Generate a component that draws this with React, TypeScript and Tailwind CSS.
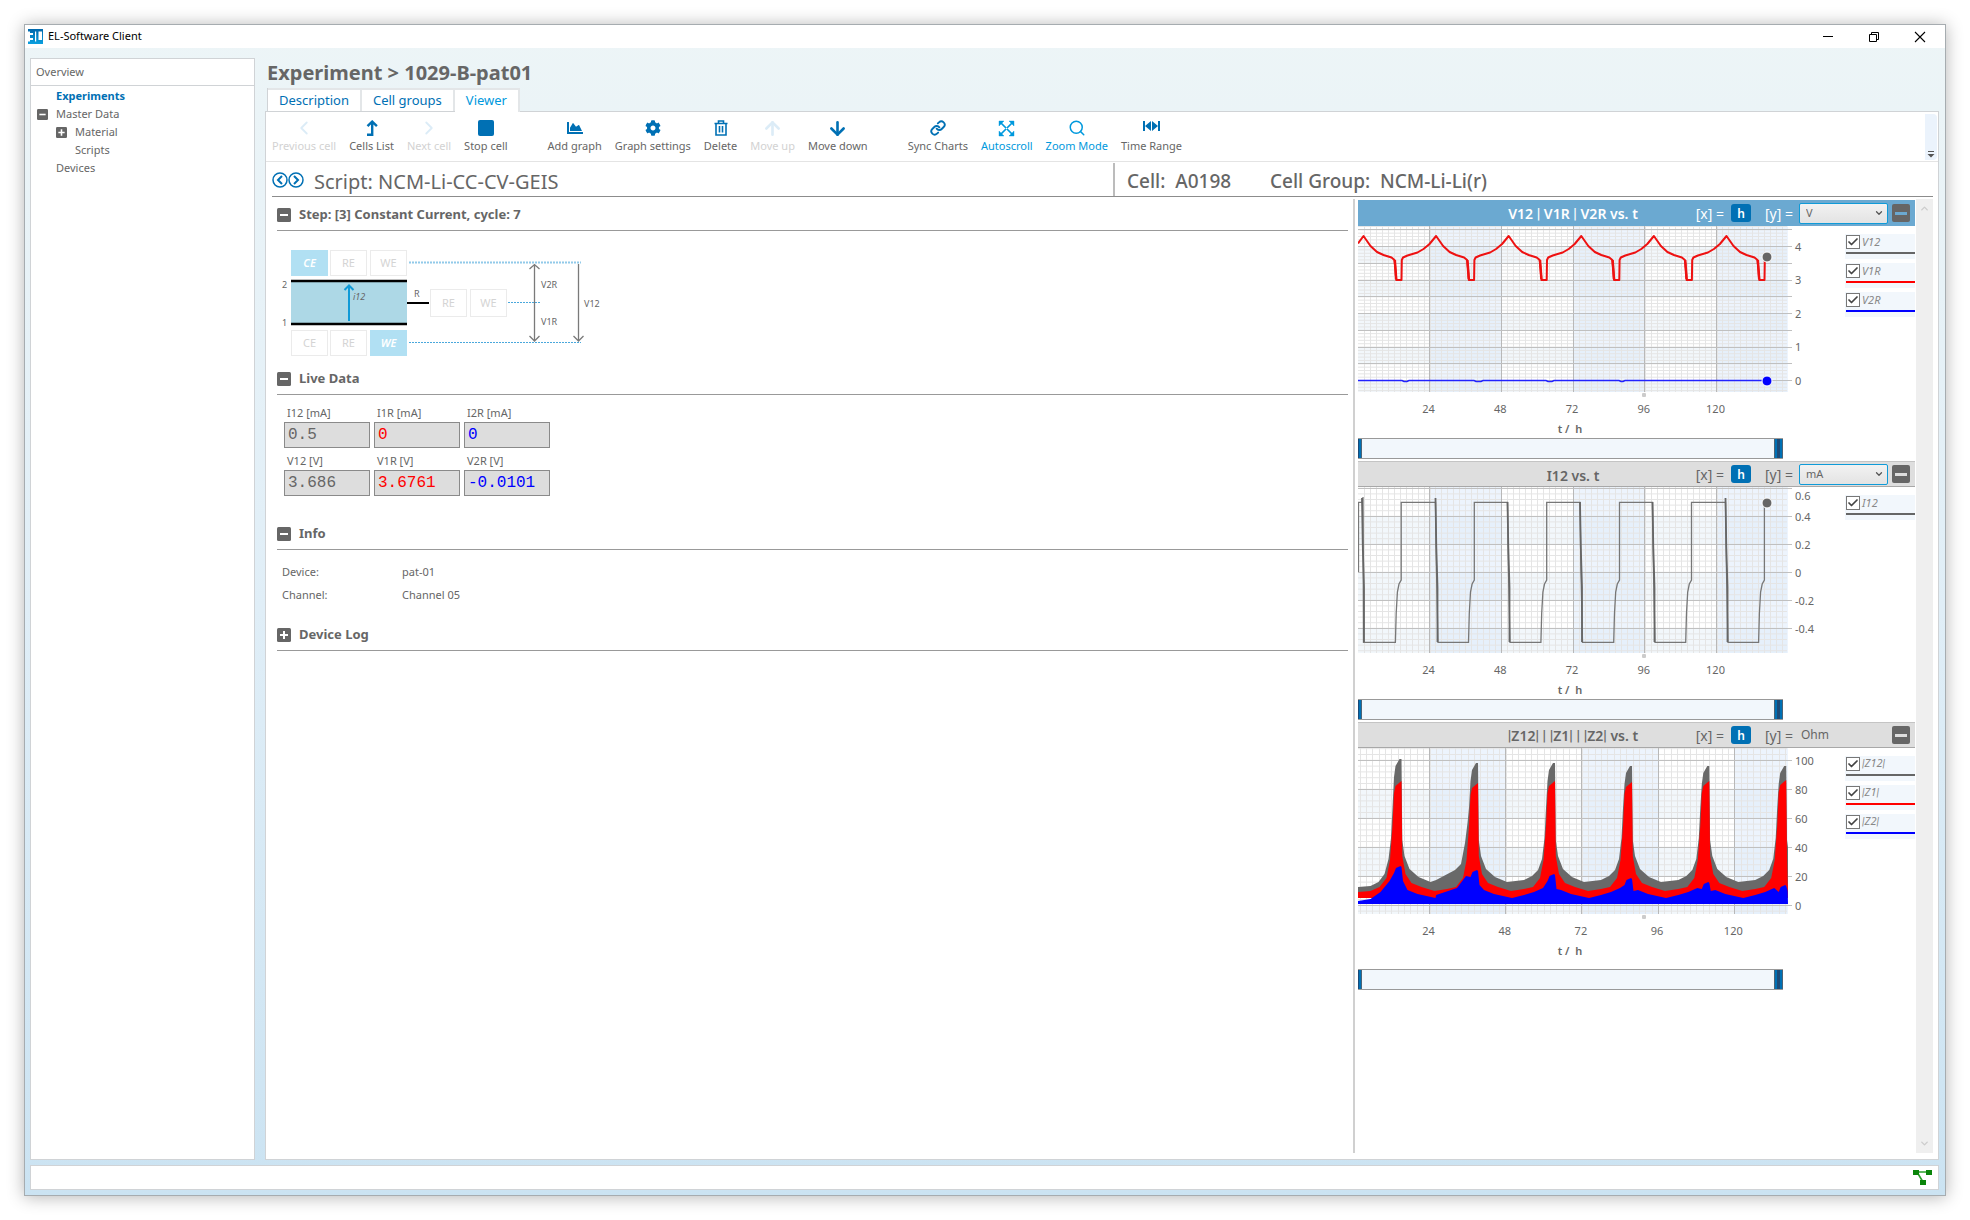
import React from "react";
import { FaChartArea, FaCog } from "react-icons/fa";
import {
  ArrowDown,
  ArrowUp,
  Check,
  ChevronDown,
  ChevronLeft,
  ChevronRight,
  ChevronUp,
  Link,
  Search,
} from "lucide-react";

/* ---------- small shared pieces ---------- */

function FoldIcon({ open, big }: { open: boolean; big?: boolean }) {
  const size = big ? 14 : 11;
  return (
    <svg width={size} height={size} viewBox="0 0 14 14" className="shrink-0">
      <rect width="14" height="14" rx="1.5" fill="#666" />
      <path d={open ? "M3 7H11" : "M3 7H11M7 3V11"} stroke="#fff" strokeWidth="2" />
    </svg>
  );
}

function Logo() {
  return (
    <svg width="15" height="15" viewBox="0 0 15 15">
      <defs>
        <linearGradient id="logo" x1="0" y1="0" x2="0" y2="1">
          <stop offset="0" stopColor="#0067ab" />
          <stop offset="1" stopColor="#0aa0e0" />
        </linearGradient>
      </defs>
      <rect width="15" height="15" fill="url(#logo)" />
      <path d="M0 2.5H2V12.5H0ZM2 4H5V6H2ZM2 9H5V11H2ZM7 2.500H8.200V12.500H7ZM10.500 2.500H14V11H10.500Z" fill="#fff" />
    </svg>
  );
}

/* Vertical bars are set in a face with a narrow bar glyph. */
function Barred({ text }: { text: string }) {
  return (
    <>
      {text.split("").map((ch, i) =>
        ch === "|" ? (
          <span key={i} className="font-['Roboto',sans-serif]">|</span>
        ) : (
          ch
        ),
      )}
    </>
  );
}

/* ---------- window frame ---------- */

function TitleBar() {
  return (
    <header className="flex h-[23px] items-center bg-white pl-[3px] pr-[19px]">
      <Logo />
      <span className="ml-[5px] flex-1 text-[11px] text-black">EL-Software Client</span>
      <div className="flex gap-[34px] text-black">
        <button aria-label="Minimize" className="grid size-3">
          <svg viewBox="0 0 12 12"><path d="M1 5.5H11" stroke="currentColor" /></svg>
        </button>
        <button aria-label="Restore" className="grid size-3">
          <svg viewBox="0 0 12 12" fill="none" stroke="currentColor">
            <path d="M1.5 3.5H8.5V10.5H1.5ZM3.5 3.5V1.5H10.5V8.5H8.5" />
          </svg>
        </button>
        <button aria-label="Close" className="grid size-3">
          <svg viewBox="0 0 12 12"><path d="M1 1L11 11M11 1L1 11" stroke="currentColor" strokeWidth="1.1" /></svg>
        </button>
      </div>
    </header>
  );
}

function Sidebar() {
  return (
    <nav className="w-[225px] shrink-0 border border-[#d0d3d6] bg-white text-[11px]">
      <h2 className="flex h-[27px] items-center border-b border-[#d0d3d6] pl-[5px]">Overview</h2>
      <ul className="mt-px leading-[18px]">
        <li className="pl-[25px] font-bold text-[#0070b4]">Experiments</li>
        <li>
          <div className="flex items-center gap-2 pl-1.5">
            <FoldIcon open />
            Master Data
          </div>
          <ul>
            <li className="flex items-center gap-2 pl-[25px]">
              <FoldIcon open={false} />
              Material
            </li>
            <li className="pl-11">Scripts</li>
          </ul>
        </li>
        <li className="pl-[25px]">Devices</li>
      </ul>
    </nav>
  );
}

/* ---------- toolbar ---------- */

const disabledIcon = "text-[#dcecf7]";
const blue = "text-[#0070b4]";
const bright = "text-[#0099dd]";

function ToolButton({
  label,
  tone = blue,
  textTone = "text-[#666]",
  children,
}: {
  label: string;
  tone?: string;
  textTone?: string;
  children: React.ReactNode;
}) {
  return (
    <button className="flex shrink-0 flex-col items-center px-1.5">
      <span className={`flex h-[18px] items-center ${tone}`}>{children}</span>
      <span className={`text-[11px] leading-[17px] ${textTone}`}>{label}</span>
    </button>
  );
}

function Toolbar() {
  const grey = "text-[#d2d2d2]";
  return (
    <div className="flex h-[50px] border-b border-[#e4e4e4] pr-px">
      <div className="flex flex-1 items-start gap-px pt-[7px]">
        <ToolButton label="Previous cell" tone={disabledIcon} textTone={grey}><ChevronLeft size={22} strokeWidth={2} /></ToolButton>
        <ToolButton label="Cells List">
          <svg width="12" height="16" viewBox="0 0 12 16" fill="none" stroke="currentColor" strokeWidth="2.4">
            <path d="M1 14.8H6.2V2.5M1.5 6.2L6.2 1.6L10.9 6.2" />
          </svg>
        </ToolButton>
        <ToolButton label="Next cell" tone={disabledIcon} textTone={grey}><ChevronRight size={22} strokeWidth={2} /></ToolButton>
        <ToolButton label="Stop cell"><span className="size-4 rounded-xs bg-[#0070b4]" /></ToolButton>
        <span className="w-[26px]" />
        <ToolButton label="Add graph"><FaChartArea size={16} /></ToolButton>
        <ToolButton label="Graph settings"><FaCog size={16} /></ToolButton>
        <ToolButton label="Delete">
          <svg width="14" height="16" viewBox="0 0 14 16" fill="none" stroke="currentColor" strokeWidth="1.6">
            <path d="M0.5 3.5H13.5M4.5 3V1H9.5V3M2 3.5V15H12V3.5M5.5 6V12.5M8.5 6V12.5" />
          </svg>
        </ToolButton>
        <ToolButton label="Move up" tone={disabledIcon} textTone={grey}><ArrowUp size={21} strokeWidth={3} /></ToolButton>
        <ToolButton label="Move down"><ArrowDown size={21} strokeWidth={3} /></ToolButton>
        <span className="w-[26px]" />
        <ToolButton label="Sync Charts"><Link size={16} strokeWidth={2.8} /></ToolButton>
        <ToolButton label="Autoscroll" tone={bright} textTone={bright}>
          <svg width="17" height="17" viewBox="0 0 17 17" fill="currentColor" stroke="currentColor">
            <path d="M2.5 2.5L14.5 14.5M14.5 2.5L2.5 14.5" strokeWidth="1.7" />
            <path d="M1 1H6L1 6ZM16 1V6L11 1ZM1 16V11L6 16ZM16 16H11L16 11Z" strokeWidth="0.4" />
            <path d="M8.5 7.5L9.5 8.5L8.5 9.500L7.500 8.5Z" fill="#fff" stroke="none" />
          </svg>
        </ToolButton>
        <ToolButton label="Zoom Mode" tone={bright} textTone={bright}><Search size={18} strokeWidth={2} /></ToolButton>
        <ToolButton label="Time Range">
          <svg width="17" height="17" viewBox="0 0 17 17" fill="currentColor">
            <path d="M0 1H2V11H0ZM15 1H17V11H15ZM8 1V11L2 6ZM9 1V11L15 6Z" />
          </svg>
        </ToolButton>
      </div>
      <button aria-label="Toolbar options" className="mt-0.5 flex h-[46px] w-3 flex-col items-center justify-end rounded-r bg-[#ebf3fc] pb-0.5">
        <svg width="8" height="8" viewBox="0 0 8 8" fill="#555">
          <path d="M1 1H7V2H1ZM0.5 4H7.5L4 7.5Z" />
        </svg>
      </button>
    </div>
  );
}

/* ---------- left pane ---------- */

function Section({ title, open = true, className = "", children }: { title: string; open?: boolean; className?: string; children?: React.ReactNode }) {
  return (
    <section className={className}>
      <h3 className="flex h-8 border-b border-[#999] text-[13px] font-bold">
        <button className="flex items-center gap-2">
          <FoldIcon open={open} big />
          {title}
        </button>
      </h3>
      {children}
    </section>
  );
}

function Electrode({ x, y, label, active, w = 37, h = 26 }: { x: number; y: number; label: string; active?: boolean; w?: number; h?: number }) {
  return (
    <g>
      <rect x={x + 0.5} y={y + 0.5} width={w - 1} height={h - 1} fill={active ? "#b1e0f3" : "#fff"} stroke={active ? "#b1e0f3" : "#ebebeb"} />
      <text
        x={x + w / 2}
        y={y + h / 2 + 4}
        textAnchor="middle"
        fontSize="11"
        fill={active ? "#fff" : "#d4d4d4"}
        fontWeight={active ? 600 : 400}
        fontStyle={active ? "italic" : "normal"}
      >
        {label}
      </text>
    </g>
  );
}

function CellDiagram() {
  return (
    <svg width="340" height="132" viewBox="0 0 340 132" className="block">
      <Electrode x={14} y={19} label="CE" active />
      <Electrode x={53} y={19} label="RE" />
      <Electrode x={93} y={19} label="WE" />
      <Electrode x={14} y={99} label="CE" />
      <Electrode x={53} y={99} label="RE" />
      <Electrode x={93} y={99} label="WE" active />
      <rect x="14" y="50" width="116" height="44" fill="#add8e6" />
      <path d="M14 50H130M14 93H130" stroke="#000" strokeWidth="2.5" />
      <path d="M130 72H152" stroke="#000" strokeWidth="2" />
      <Electrode x={153} y={58} label="RE" h={28} />
      <Electrode x={193} y={58} label="WE" h={28} />
      <path d="M72 90V54M67.500 59L72 54.500L76.500 59" stroke="#109ad7" strokeWidth="2" fill="none" />
      <g stroke="#4aa8dc" strokeDasharray="2 1">
        <path d="M132 31.500H304" strokeWidth="2" opacity="0.6" />
        <path d="M231 71.500H263" strokeWidth="1" />
        <path d="M132 111.500H304" strokeWidth="1" />
      </g>
      <g stroke="#7a7a7a" strokeWidth="1.300" fill="none">
        <path d="M257.500 33V110M252.500 38L257.500 33.500L262.500 38M252.500 105L257.500 110L262.500 105" />
        <path d="M301.500 33V110M296.500 105L301.500 110L306.500 105" />
      </g>
      <g fill="#666" fontSize="9">
        <text x="5" y="57">2</text>
        <text x="5" y="95">1</text>
        <text x="137" y="66">R</text>
        <text x="76" y="69" fontStyle="italic">i12</text>
        <text x="264" y="57">V2R</text>
        <text x="264" y="94">V1R</text>
        <text x="307" y="76">V12</text>
      </g>
    </svg>
  );
}

const readings = [
  { label: "I12 [mA]", value: "0.5", tone: "text-[#666]" },
  { label: "I1R [mA]", value: "0", tone: "text-[#ff0000]" },
  { label: "I2R [mA]", value: "0", tone: "text-[#0000ff]" },
  { label: "V12 [V]", value: "3.686", tone: "text-[#666]" },
  { label: "V1R [V]", value: "3.6761", tone: "text-[#ff0000]" },
  { label: "V2R [V]", value: "-0.0101", tone: "text-[#0000ff]" },
];

function LeftPane() {
  return (
    <div className="min-w-0 flex-1 pl-[5px] pr-[5px] text-[11px]">
      <Section title="Step: [3] Constant Current, cycle: 7">
        <CellDiagram />
      </Section>
      <Section title="Live Data">
        <div className="grid w-fit grid-cols-3 gap-x-1 px-[7px] pt-2.5">
          {readings.map((r) => (
            <label key={r.label} className="block w-[86px]">
              <span className="block h-[17px] pl-[3px] leading-[15px]">{r.label}</span>
              <input
                readOnly
                value={r.value}
                className={`mb-[5px] block h-[26px] w-full border border-[#8a8a8a] bg-[#ddd] px-[3px] font-['Liberation_Mono',monospace] text-[16px] outline-none ${r.tone}`}
              />
            </label>
          ))}
        </div>
      </Section>
      <Section title="Info" className="mt-[17px]">
        <dl className="grid grid-cols-[120px_1fr] pl-[5px] pt-2.5 leading-[23px]">
          <dt>Device:</dt>
          <dd>pat-01</dd>
          <dt>Channel:</dt>
          <dd>Channel 05</dd>
        </dl>
      </Section>
      <Section title="Device Log" open={false} className="mt-[13px]" />
    </div>
  );
}

/* ---------- charts ---------- */

const PLOT_W = 429;
const PLOT_H = 166;
const pts = (p: number[][]) => p.map((q) => q.join(",")).join(" ");

type Axis = { first: number; step: number };

function Plot({
  x,
  y,
  yLabels,
  children,
}: {
  x: Axis;
  y: Axis;
  yLabels: [number, string][];
  children: React.ReactNode;
}) {
  const minorX: number[] = [];
  for (let v = x.first - x.step; v < PLOT_W; v += x.step / 12) if (v > 0) minorX.push(v);
  const minorY: number[] = [];
  for (let v = y.first - y.step; v < PLOT_H; v += y.step / 5) if (v > 0) minorY.push(v);
  const majorX = [0, 1, 2, 3, 4].map((k) => x.first + k * x.step);
  const majorY: number[] = [];
  for (let v = y.first; v < PLOT_H; v += y.step) majorY.push(v);
  const clip = `plot${y.first}`;
  return (
    <svg width="487" height="212" viewBox="0 0 487 212" className="block shrink-0">
      <clipPath id={clip}><rect width={PLOT_W + 1} height={PLOT_H} /></clipPath>
      <g clipPath={`url(#${clip})`}>
        <rect width={PLOT_W} height={PLOT_H} fill="#fff" />
        {majorY.map((v, i) => (i % 2 === 1 ? <rect key={v} y={v} width={PLOT_W} height={y.step} fill="#f2f7fb" /> : null))}
        {[0, 2, 4].map((k) => <rect key={k} x={majorX[k]} width={x.step} height={PLOT_H} fill="#d8e6fa" opacity="0.45" />)}
        <path d={minorX.map((v) => `M${Math.round(v) + 0.5} 0V166`).join("")} stroke="#e5e5e5" />
        <path d={minorY.map((v) => `M0 ${v}H429`).join("")} stroke="#e5e5e5" />
        <path d={majorX.map((v) => `M${Math.round(v - 0.5) + 0.5} 0V166`).join("")} stroke="#b8b8b8" />
      </g>
      <path d={majorY.map((v) => `M0 ${Math.floor(v) + 0.5}H434`).join("")} stroke="#c0c0c0" />
      <g clipPath={`url(#${clip})`}>{children}</g>
      <rect x="284" y="167" width="4" height="4" rx="1" fill="#ccc" />
      <g fill="#666" fontSize="11">
        {yLabels.map(([v, t]) => <text key={t} x="437" y={v + 4}>{t}</text>)}
        {majorX.map((v, k) => <text key={k} x={v - 1} y="187" textAnchor="middle">{24 * (k + 1)}</text>)}
        <text x="212" y="207" textAnchor="middle" fontWeight="600">{"t /\u00a0 h"}</text>
      </g>
    </svg>
  );
}

/* V1R: one charge/discharge cycle relative to its peak, repeated every 72.6 px. */
function VoltageSeries() {
  const cycle = [[0, 10], [7, 20], [13.5, 26], [20, 29], [28, 31.5], [31, 34], [32, 44], [32.7, 54], [38, 54], [38.3, 34], [39.5, 31.5], [44, 29.5], [54, 26.5], [60, 23], [66, 18]];
  const line: number[][] = [[0, 17.5]];
  for (let k = 0; k < 6; k++) {
    for (const [dx, y] of cycle) {
      const px = 5.5 + 72.6 * k + dx;
      if (px < 408) line.push([px, y]);
    }
  }
  return (
    <g fill="none">
      <polyline points={pts(line)} stroke="#ee1111" strokeWidth="2" strokeLinejoin="round" />
      {[0, 1, 2, 3, 4, 5].map((k) => (
        <path key={k} d={`M${36.8 + 72.6 * k} 34L${38.2 + 72.6 * k} 53`} stroke="#ee1111" strokeWidth="2.500" />
      ))}
      <path d="M0 154.500H44L46 155.500H49L51 154.500H116L118 155.500H123L125 154.500H188L190 155.500H194L196 154.500H261L263 155.500H265L267 154.500H409" stroke="#2222ff" strokeWidth="1.500" />
      <circle cx="409" cy="31" r="5" fill="#666" stroke="#fff" />
      <circle cx="409" cy="155" r="5" fill="#00f" stroke="#fff" />
    </g>
  );
}

function CurrentSeries() {
  const up = [43.2, 116.3, 188.7, 261.5, 333.5, 406.4];
  const drop = [77.5, 149.5, 222, 294.5, 367.5];
  const line: number[][] = [[0.5, 85], [0.5, 15.3], [4, 15.3], [5, 10], [5.5, 155.3]];
  up.forEach((u, i) => {
    line.push([u - 5.8, 155.3], [u - 5, 126], [u - 3.8, 105], [u - 2.2, 97], [u, 93], [u, 15.3]);
    if (i < drop.length) line.push([drop[i], 15.3], [drop[i] + 1, 84], [drop[i] + 2.5, 155.3]);
  });
  return (
    <g fill="none" stroke="#777">
      <polyline points={pts(line)} strokeWidth="1.300" />
      {[4, ...drop].map((d, i) => (
        <path key={d} d={`M${d} ${i === 0 || i === 1 || i === 5 ? 11 : 15}L${d + 0.8} 60L${d + 2} 100V155`} stroke="#666" strokeWidth="1.800" />
      ))}
      <circle cx="409" cy="16" r="5" fill="#666" stroke="#fff" />
    </g>
  );
}

/* Impedance envelopes: each peak is a slow rise followed by a sharp fall. */
const edges = [43.5, 120, 197, 274, 351.3, 428.2];
const tops = {
  grey: [11, 15, 15, 18, 18, 18],
  red: [33, 35, 33, 34, 33, 32],
  blue: [119, 123, 127, 131, 135, 138],
};
function envelope(kind: "grey" | "red" | "blue") {
  const base = { grey: 134, red: 143, blue: 150 }[kind];
  const line: number[][] = [[0, { grey: 139, red: 144, blue: 153 }[kind]]];
  edges.forEach((e, i) => {
    const t = tops[kind][i];
    const first = i === 0;
    const wide = i === 1 ? 1.35 : 1;
    if (kind === "grey") {
      line.push([e - 31 * wide, first ? 138 : base - 2], [e - 23, first ? 134 : i === 1 ? 122 : 128], [e - 17, first ? 126 : i === 1 ? 116 : 122], [e - 13, i === 1 ? 95 : 111], [e - 10.500, i === 1 ? 75 : 90], [e - 9, 60], [e - 7.500, t + 18], [e - 6, t + 7], [e - 2, t], [e, t], [e + 0.800, 92], [e + 3, 108], [e + 8, 121], [e + 17, 129], [e + 29, base]);
    } else if (kind === "red") {
      line.push([e - 31, first ? 143 : base - 2], [e - 22, 139], [e - 15, 130], [e - 11.500, 112], [e - 9, 78], [e - 7.500, t + 12], [e - 6, t + 5], [e - 2.500, t + 2], [e, t], [e + 0.800, 108], [e + 4, 126], [e + 10, 135], [e + 20, 139], [e + 33, base]);
    } else {
      const shoulder = Math.min(t + 14, 143);
      line.push([e - 31 * wide, first ? 151 : 147], [e - 21, i === 1 ? 140 : 144], [e - 12, Math.min(shoulder, i === 1 ? 128 : 140)], [e - 7.500, t + 6], [e - 5.500, t + 1], [e - 1, t - 1], [e, t], [e + 1.500, shoulder], [e + 6, 142], [e + 16, 146], [e + 34, base]);
    }
  });
  const bottom = kind === "blue" ? 156 : 150;
  return pts([...line.filter(([px]) => px <= 432), [430, bottom], [0, bottom]]);
}

function ImpedanceSeries() {
  return (
    <g>
      <polygon points={envelope("grey")} fill="#696969" />
      <polygon points={envelope("red")} fill="#f00" />
      <polygon points={envelope("blue")} fill="#00f" />
    </g>
  );
}

function RangeSlider({ name }: { name: string }) {
  const input =
    "pointer-events-none col-start-1 row-start-1 -ml-[5px] h-[19px] w-[430px] appearance-none bg-transparent outline-none [&::-webkit-slider-thumb]:pointer-events-auto [&::-webkit-slider-thumb]:h-[19px] [&::-webkit-slider-thumb]:w-[9px] [&::-webkit-slider-thumb]:appearance-none [&::-webkit-slider-thumb]:border-x [&::-webkit-slider-thumb]:border-[#4d6375] [&::-webkit-slider-thumb]:bg-[linear-gradient(90deg,#0070b4_35%,#1c4a77_35%,#1c4a77_65%,#0070b4_65%)]";
  return (
    <div className="grid h-[21px] w-[425px] overflow-hidden border-y border-[#999] bg-[#f2f7fc]">
      <input type="range" aria-label={`${name} range start`} defaultValue={0} className={input} />
      <input type="range" aria-label={`${name} range end`} defaultValue={100} className={input} />
    </div>
  );
}

function LegendItem({ name, tone }: { name: string; tone: string }) {
  return (
    <label className="block h-[25px] bg-[#f2f7fc] pl-px text-[11px] italic text-[#888]">
      <span className={`flex h-5 items-center gap-0.5 border-b-2 pb-0.5 ${tone}`}>
        <span className="grid size-3.5 shrink-0">
          <input type="checkbox" defaultChecked className="peer col-start-1 row-start-1 size-3.5 appearance-none border border-[#777] bg-white" />
          <Check size={12} strokeWidth={3.5} className="pointer-events-none invisible col-start-1 row-start-1 place-self-center text-[#444] peer-checked:visible" />
        </span>
        <span><Barred text={name} /></span>
      </span>
    </label>
  );
}

function ChartBlock({
  title,
  unit,
  fixedUnit,
  active,
  legend,
  sliderGap = "",
  children,
}: {
  title: string;
  unit: string;
  fixedUnit?: boolean;
  active?: boolean;
  legend: [string, string][];
  sliderGap?: string;
  children: React.ReactNode;
}) {
  return (
    <section className="mb-0.5">
      <div className={`flex h-[26px] items-center border-y text-[14px] ${active ? "border-[#6ba9d1] bg-[#6ba9d1] text-white" : "border-t-[#c4c4c4] border-b-[#a8a8a8] bg-[#dedede] text-[#666]"}`}>
        <div className="grid flex-1 grid-cols-[430px_1fr] items-center">
          <h3 className="col-start-1 row-start-1 pt-0.5 text-center text-[14px] font-semibold"><Barred text={title} /></h3>
          <div className="col-start-1 col-end-3 row-start-1 flex items-center justify-end">
            <span>[x] =</span>
            <button className="mr-3.5 ml-[7px] h-[18px] w-5 rounded-[3px] bg-[#0070b4] text-[12px] leading-[17px] font-semibold text-white">h</button>
            <span>[y] =</span>
          </div>
        </div>
        {fixedUnit ? (
          <span className="ml-2 w-[91px] text-[12px]">{unit}</span>
        ) : (
          <span className="mr-1 ml-1.5 grid w-[89px] items-center">
            <select aria-label={`${title} y unit`} className="col-start-1 row-start-1 h-[21px] appearance-none rounded-xs border border-[#0f9bd8] bg-linear-to-b from-[#f2f2f2] to-[#e3e3e3] pl-1.5 text-[11px] text-[#666] outline-none">
              <option>{unit}</option>
            </select>
            <ChevronDown size={10} strokeWidth={3} className="pointer-events-none col-start-1 row-start-1 mr-1 justify-self-end text-[#555]" />
          </span>
        )}
        <button aria-label={`Collapse ${title}`} className="mr-[5px] grid h-[18px] w-[18px] place-items-center rounded-xs bg-[#666]">
          <span className={`h-[3px] w-3 ${active ? "bg-[#6ba9d1]" : "bg-[#dedede]"}`} />
        </button>
      </div>
      <div className="flex">
        {children}
        <div className="flex flex-1 flex-col gap-1 pt-2">
          {legend.map(([name, tone]) => <LegendItem key={name} name={name} tone={tone} />)}
        </div>
      </div>
      <div className={sliderGap}>
        <RangeSlider name={title} />
      </div>
    </section>
  );
}

const G = "border-[#666]";
const R = "border-[#ff0000]";
const B = "border-[#0000ff]";

function Charts() {
  return (
    <div className="flex w-[580px] shrink-0 border-l-2 border-[#d0d0d0] pl-[3px]">
      <div className="flex-1 pt-px">
        <ChartBlock title="V12 | V1R | V2R vs. t" unit="V" active legend={[["V12", G], ["V1R", R], ["V2R", B]]}>
          <Plot
            x={{ first: 71.5, step: 71.75 }}
            y={{ first: 3.8, step: 16.75 }}
            yLabels={[[20.5, "4"], [54, "3"], [87.500, "2"], [121, "1"], [154.500, "0"]]}
          >
            <VoltageSeries />
          </Plot>
        </ChartBlock>
        <ChartBlock title="I12 vs. t" unit="mA" legend={[["I12", G]]}>
          <Plot
            x={{ first: 71.5, step: 71.75 }}
            y={{ first: 1.3, step: 28 }}
            yLabels={[[9, "0.6"], [29.500, "0.4"], [57.500, "0.2"], [85.500, "0"], [113.500, "-0.2"], [141.500, "-0.4"]]}
          >
            <CurrentSeries />
          </Plot>
        </ChartBlock>
        <ChartBlock title="|Z12| | |Z1| | |Z2| vs. t" unit="Ohm" fixedUnit sliderGap="pt-[9px]" legend={[["|Z12|", G], ["|Z1|", R], ["|Z2|", B]]}>
          <Plot
            x={{ first: 71.5, step: 76.2 }}
            y={{ first: 12.3, step: 29 }}
            yLabels={[[12.500, "100"], [41.500, "80"], [70.500, "60"], [99.500, "40"], [128.500, "20"], [157.500, "0"]]}
          >
            <ImpedanceSeries />
          </Plot>
        </ChartBlock>
      </div>
      <div className="ml-px flex w-[17px] flex-col items-center justify-between bg-[#efefef] py-1 text-[#ccc]">
        <ChevronUp size={11} strokeWidth={3} />
        <ChevronDown size={11} strokeWidth={3} />
      </div>
    </div>
  );
}

/* ---------- page ---------- */

function Tab({ label, active }: { label: string; active?: boolean }) {
  return (
    <button
      role="tab"
      aria-selected={!!active}
      className={`border-t-2 border-r-2 border-[#e3e6e8] bg-white px-[11px] text-[13px] ${active ? "-mb-px h-6 text-[#0099dd]" : "h-[23px] text-[#0070b4]"}`}
    >
      {label}
    </button>
  );
}

export default function App() {
  return (
    <div className="flex min-h-screen flex-col bg-white p-6 font-['Noto_Sans','Open_Sans',sans-serif] text-[#666]">
      <div className="flex flex-1 flex-col border border-[#a6acb0] bg-linear-to-b from-[#edf5f7] via-[#e0eef7] to-[#cbe3f2] shadow-[0_1px_16px_rgba(0,0,0,0.3)]">
        <TitleBar />
        <div className="flex flex-1 gap-2.5 pl-[5px] pr-[6px] pt-2.5">
          <Sidebar />
          <main className="flex min-w-0 flex-1 flex-col">
            <h1 className="h-[30px] pl-0.5 text-[20px] leading-[30px] font-bold">Experiment &gt; 1029-B-pat01</h1>
            <div role="tablist" className="flex items-end pl-0.5">
              <div className="relative z-10 flex items-end border-l border-[#d0d3d6]">
                <Tab label="Description" />
                <Tab label="Cell groups" />
                <Tab label="Viewer" active />
              </div>
            </div>
            <div className="flex flex-1 flex-col border border-[#d0d3d6] bg-white">
              <Toolbar />
              <div className="flex flex-1 flex-col pb-1.5 pl-1.5 pr-[5px]">
                <div className="flex h-[35px] border-b border-[#8c8c8c] pt-px">
                  <div className="flex flex-1 items-center gap-2.5 text-[20px]">
                    <svg width="32" height="16" viewBox="0 0 32 16" fill="none" stroke="#0070b4" strokeWidth="1.500">
                      <circle cx="8" cy="8" r="7" />
                      <circle cx="24" cy="8" r="7" />
                      <path d="M10 4L6 8L10 12M22 4L26 8L22 12" strokeWidth="2" />
                    </svg>
                    <h2 className="pt-1">Script: NCM-Li-CC-CV-GEIS</h2>
                  </div>
                  <div className="flex w-[820px] items-center border-l-2 border-[#bcbcbc] pl-3 pt-1 text-[19px] font-medium">
                    <span className="w-[143px]">Cell:&nbsp; A0198</span>
                    <span>Cell Group:&nbsp; NCM-Li-Li(r)</span>
                  </div>
                </div>
                <div className="flex flex-1 pt-0.5">
                  <LeftPane />
                  <Charts />
                </div>
              </div>
            </div>
          </main>
        </div>
        <footer className="mt-[5px] mr-[6px] mb-[5px] ml-[5px] flex h-[25px] items-center justify-end border border-[#d0d3d6] bg-white pr-[5px]">
          <svg width="20" height="17" viewBox="0 0 20 17" fill="#0a850a">
            <path d="M3 3H16M4 3L10 13" stroke="#2aa02a" strokeWidth="1.600" />
            <path d="M0 1H6V6H0ZM13 1H19V6H13ZM7 11H13V16H7Z" />
          </svg>
        </footer>
      </div>
    </div>
  );
}
